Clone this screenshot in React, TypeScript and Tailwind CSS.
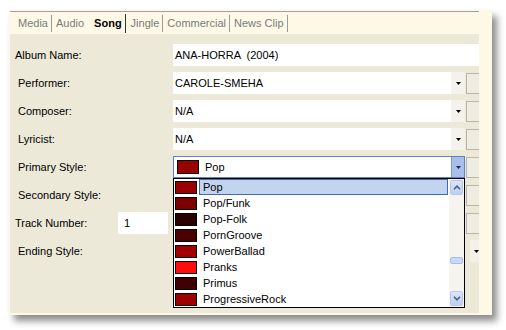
import React from "react";

const styles = [
  { name: "Pop", color: "#990000", selected: true },
  { name: "Pop/Funk", color: "#7c0000" },
  { name: "Pop-Folk", color: "#2a0000" },
  { name: "PornGroove", color: "#4a0000" },
  { name: "PowerBallad", color: "#a00000" },
  { name: "Pranks", color: "#ff0d0d" },
  { name: "Primus", color: "#3e0000" },
  { name: "ProgressiveRock", color: "#9e0000" },
];

function DownArrow({ color = "#000" }: { color?: string }) {
  return (
    <svg width="5" height="3" viewBox="0 0 5 3">
      <polygon points="0,0 5,0 2.5,3" fill={color} />
    </svg>
  );
}

function SideBox() {
  return <div className="ml-[1px] w-[13px] h-[21px] bg-[#efede2] border-l border-t border-b border-[#b9b6a8]" />;
}

function Combo({ value }: { value: string }) {
  return (
    <div className="flex items-center h-[22px]">
      <div className="w-[278px] h-full bg-white flex items-center pl-[2px]">{value}</div>
      <div className="w-[14px] h-full bg-[#f3f2ec] flex items-center justify-center">
        <DownArrow />
      </div>
      <SideBox />
    </div>
  );
}

function Label({ children, pl = "pl-[8px]", w = "w-[163px]" }: { children: React.ReactNode; pl?: string; w?: string }) {
  return <div className={`${w} ${pl} shrink-0`}>{children}</div>;
}

function Chevron({ up }: { up?: boolean }) {
  return (
    <svg width="8" height="5" viewBox="0 0 8 5">
      <path d={up ? "M1 4.2 L4 1.2 L7 4.2" : "M1 0.8 L4 3.8 L7 0.8"} stroke="#4d6185" strokeWidth="1.6" fill="none" />
    </svg>
  );
}

function ScrollButton({ up }: { up?: boolean }) {
  return (
    <div className="mx-[1px] h-[15px] rounded-[2px] border border-[#b8c9ee] bg-gradient-to-b from-[#dbe6fb] to-[#bccdf2] flex items-center justify-center">
      <Chevron up={up} />
    </div>
  );
}

export default function App() {
  return (
    <div className="w-[506px] h-[330px] bg-white overflow-hidden pt-[10px] pl-[9px] font-['Liberation_Sans',Arial,sans-serif] text-[11px] text-black">
      <div className="w-[483px] h-[305px] bg-[#fdf9e6] pt-[1px] pl-[1px] shadow-[5px_6px_7px_rgba(0,0,0,0.45)]">
        <div className="w-[469px] h-[302px] border-t border-[#a5a18f] flex flex-col">
          {/* tabs */}
          <div className="h-[22px] flex items-center pl-[8px] text-[#7b7b7b] leading-none">
            <span className="pr-[3px] border-r border-[#9a9a9a] py-[3px]">Media</span>
            <span className="pl-[4px] pr-[10px] py-[3px]">Audio</span>
            <span className="pr-[3px] border-r border-[#333] py-[4px] font-bold text-black">Song</span>
            <span className="pl-[5px] pr-[3px] border-r border-[#9a9a9a] py-[3px]">Jingle</span>
            <span className="pl-[4px] pr-[3px] border-r border-[#9a9a9a] py-[3px]">Commercial</span>
            <span className="pl-[4px] pr-[3px] border-r border-[#9a9a9a] py-[3px]">News Clip</span>
          </div>

          {/* form */}
          <div className="flex-1 bg-[#ece9d8] relative pt-[10px] flex flex-col gap-[6px]">
            <div className="flex items-center h-[22px]">
              <Label pl="pl-[5px]">Album Name:</Label>
              <div className="w-[306px] h-full bg-white flex items-center pl-[2px] whitespace-pre">ANA-HORRA  (2004)</div>
            </div>
            <div className="flex items-center h-[22px]">
              <Label>Performer:</Label>
              <Combo value="CAROLE-SMEHA" />
            </div>
            <div className="flex items-center h-[22px]">
              <Label>Composer:</Label>
              <Combo value="N/A" />
            </div>
            <div className="flex items-center h-[22px]">
              <Label>Lyricist:</Label>
              <Combo value="N/A" />
            </div>
            <div className="flex items-center h-[22px]">
              <Label>Primary Style:</Label>
              <div className="w-[292px] h-[22px] border border-[#5f82c2] bg-white flex items-center">
                <div className="ml-[3px] w-[22px] h-[14px] border border-black bg-[#990000]" />
                <span className="ml-[6px] flex-1">Pop</span>
                <div className="w-[13px] h-full bg-[#a9bfeb] border-l border-[#7f9db9] flex items-center justify-center">
                  <DownArrow color="#1f2a44" />
                </div>
              </div>
              <SideBox />
            </div>
            <div className="flex items-center h-[22px]">
              <Label>Secondary Style:</Label>
              <Combo value="" />
            </div>
            <div className="flex items-center h-[22px]">
              <Label pl="pl-[5px]" w="w-[108px]">Track Number:</Label>
              <div className="w-[50px] h-full bg-white flex items-center pl-[6px]">1</div>
              <div className="ml-auto">
                <SideBox />
              </div>
            </div>
            <div className="flex items-center h-[22px]">
              <Label>Ending Style:</Label>
              <div className="ml-auto w-[9px] h-full bg-[#f3f1e8] flex items-center justify-end pr-[0px]">
                <DownArrow />
              </div>
            </div>

            {/* open dropdown list */}
            <div className="absolute left-[163px] top-[144px] w-[292px] h-[130px] border border-black bg-white flex">
              <div className="flex-1 flex flex-col">
                {styles.map((s) => (
                  <div key={s.name} className="h-[16px] flex items-center">
                    <div className="ml-[1px] w-[22px] h-[13px] border border-black shrink-0" style={{ backgroundColor: s.color }} />
                    <div
                      className={
                        s.selected
                          ? "ml-[2px] mr-[1px] flex-1 h-full flex items-center pl-[3px] bg-[#c3d4ef] border border-[#3f6ab8]"
                          : "ml-[2px] mr-[1px] flex-1 h-full flex items-center pl-[4px]"
                      }
                    >
                      {s.name}
                    </div>
                  </div>
                ))}
              </div>
              <div className="w-[15px] h-full bg-[#f5f4ee] flex flex-col py-[1px]">
                <ScrollButton up />
                <div className="mt-[62px] mx-[1px] h-[7px] rounded-[2px] border border-[#a9bdea] bg-[#c9d8f6]" />
                <div className="flex-1" />
                <ScrollButton />
              </div>
            </div>
          </div>
        </div>
      </div>
    </div>
  );
}
